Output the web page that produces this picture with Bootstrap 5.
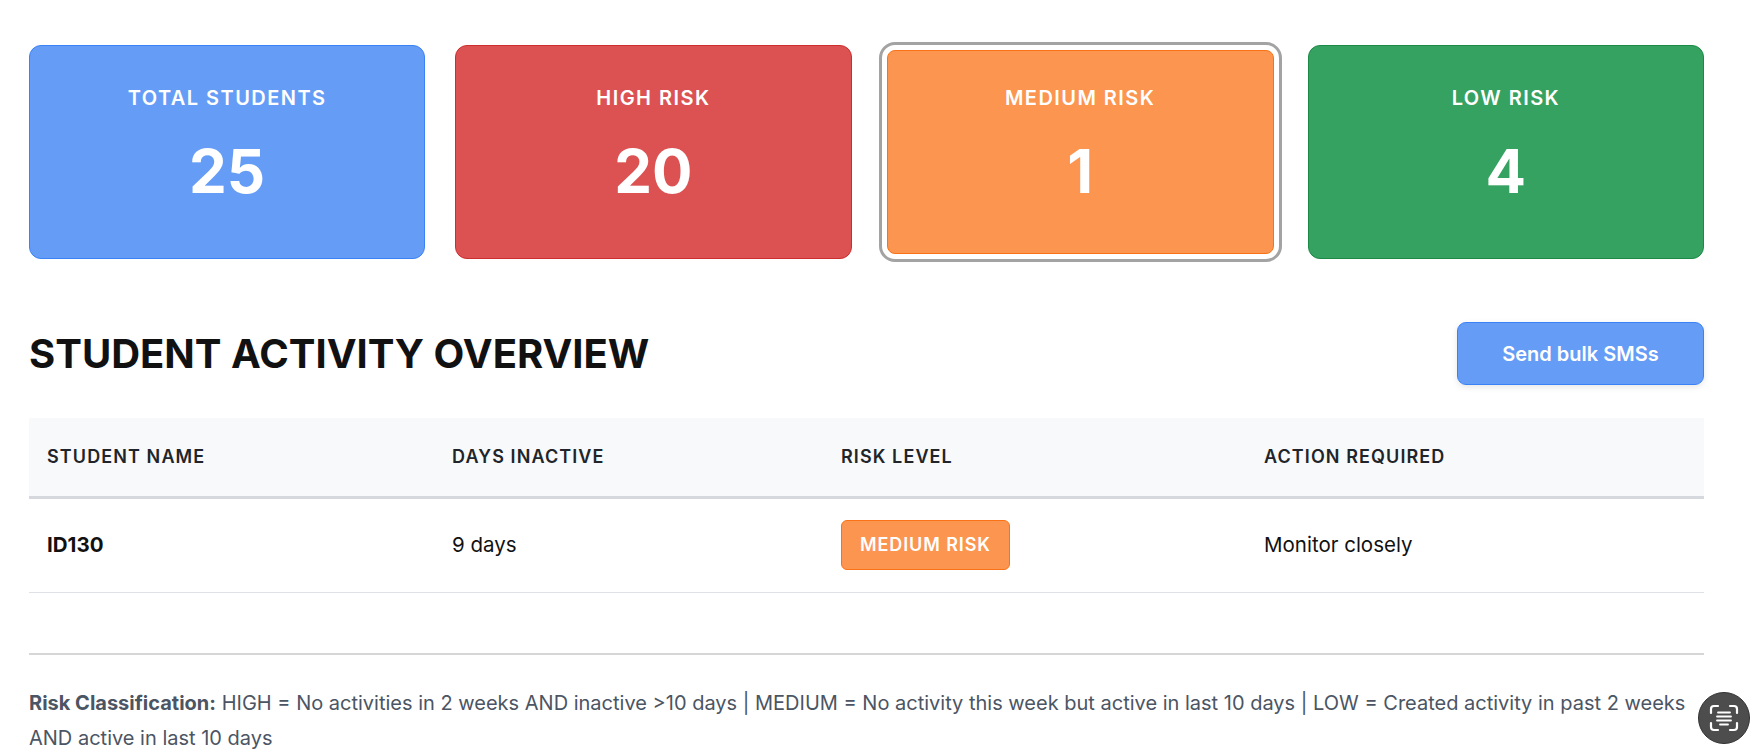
<!DOCTYPE html>
<html lang="en">
<head>
<meta charset="utf-8">
<title>Student Activity Overview</title>
<link href="https://cdn.jsdelivr.net/npm/bootstrap@5.3.0/dist/css/bootstrap.min.css" rel="stylesheet">
<style>
html, body { height: 755px; overflow: hidden; }
body { font-family: Inter, "Liberation Sans", sans-serif; color: #111; background: #fff; }
.page-wrap { padding: 45px 47px 0 29px; }
.stat-grid { display: grid; grid-template-columns: repeat(4, 1fr); gap: 30px; height: 214px; }
.stat-box { border: 1px solid; border-radius: 12px; color: #fff; text-align: center; padding-top: 39px; font-weight: 600; }
.stat-label { font-size: 20px; line-height: 26px; letter-spacing: 1.45px; margin-bottom: 30px; }
.stat-value { font-size: 60px; line-height: 60px; font-weight: 700; }
.tone-blue { background: #659cf6; border-color: #3b82f6; }
.tone-red { background: #dc5252; border-color: #cc2e2e; }
.tone-orange { background: #fc954f; border-color: #f97316; }
.tone-green { background: #35a261; border-color: #1b8a45; }
.stat-focus { margin: 5px 4px 5px 5px; padding-top: 34px; border-radius: 8px; outline: 3px solid #a3a3a3; outline-offset: 5px; }
.title-row { margin-top: 63px; height: 63px; }
.main-title { font-size: 40px; line-height: 63px; font-weight: 700; margin: 0; color: #111; }
.bulk-btn { width: 247px; height: 63px; font-size: 20px; font-weight: 600; border-radius: 9px; color: #fff; background: #659cf6; border: 1px solid #3b82f6; box-shadow: 0 2px 6px rgba(0,0,0,.1); }
.bulk-btn:hover { color: #fff; background: #659cf6; border-color: #3b82f6; }
.data-table { margin: 33px 0 0; table-layout: fixed; width: 100%; }
.data-table th { background: #f8f9fa; height: 79px; padding: 0 18px; vertical-align: middle; font-size: 18px; font-weight: 600; letter-spacing: 1.1px; color: #212529; border-bottom: 3px solid #d5d9de; }
.data-table td { height: 95px; padding: 0 18px; vertical-align: middle; font-size: 20.5px; color: #111; border-bottom: 1px solid #dee2e6; }
.risk-tag { display: inline-block; height: 50px; line-height: 48px; padding: 0 18px; font-size: 18px; font-weight: 600; letter-spacing: .9px; color: #fff; background: #fc954f; border: 1px solid #f97316; border-radius: 6px; }
.rule-line { margin: 60px 0 0; border: 0; border-top: 2px solid #d6d6d6; opacity: 1; }
.note-text { margin: 31px 0 0; font-size: 20px; line-height: 35px; color: #4b5563; }
.note-text strong { font-weight: 700; }
.scan-fab { position: absolute; left: 1698px; top: 692px; width: 52px; height: 52px; border-radius: 50%; background: #4d4d4d; border: 1px solid #333; display: flex; align-items: center; justify-content: center; }
</style>
</head>
<body>
<div class="page-wrap">
  <div class="stat-grid">
    <div class="stat-box tone-blue"><div class="stat-label">TOTAL STUDENTS</div><div class="stat-value">25</div></div>
    <div class="stat-box tone-red"><div class="stat-label">HIGH RISK</div><div class="stat-value">20</div></div>
    <div class="stat-box tone-orange stat-focus"><div class="stat-label">MEDIUM RISK</div><div class="stat-value">1</div></div>
    <div class="stat-box tone-green"><div class="stat-label">LOW RISK</div><div class="stat-value">4</div></div>
  </div>
  <div class="d-flex justify-content-between align-items-center title-row">
    <h1 class="main-title">STUDENT ACTIVITY OVERVIEW</h1>
    <button type="button" class="btn bulk-btn">Send bulk SMSs</button>
  </div>
  <table class="table data-table">
    <colgroup><col style="width:405px"><col style="width:389px"><col style="width:423px"><col></colgroup>
    <thead><tr><th>STUDENT NAME</th><th>DAYS INACTIVE</th><th>RISK LEVEL</th><th>ACTION REQUIRED</th></tr></thead>
    <tbody><tr><td class="fw-bold">ID130</td><td>9 days</td><td><span class="risk-tag">MEDIUM RISK</span></td><td>Monitor closely</td></tr></tbody>
  </table>
  <hr class="rule-line">
  <p class="note-text"><strong>Risk Classification:</strong> HIGH = No activities in 2 weeks AND inactive &gt;10 days | MEDIUM = No activity this week but active in last 10 days | LOW = Created activity in past 2 weeks AND active in last 10 days</p>
</div>
<div class="scan-fab">
  <svg width="30" height="28" viewBox="0 0 30 28" fill="none" stroke="#fff" stroke-width="2.2" stroke-linecap="round">
    <path d="M2 9V5a3 3 0 0 1 3-3h4M21 2h4a3 3 0 0 1 3 3v4M2 19v4a3 3 0 0 0 3 3h4M28 19v4a3 3 0 0 1-3 3h-4"/>
    <path d="M9 8.500h12M8 12.500h14M8 16.500h14M11 20.500h8" stroke-width="1.800"/>
  </svg>
</div>
</body>
</html>
